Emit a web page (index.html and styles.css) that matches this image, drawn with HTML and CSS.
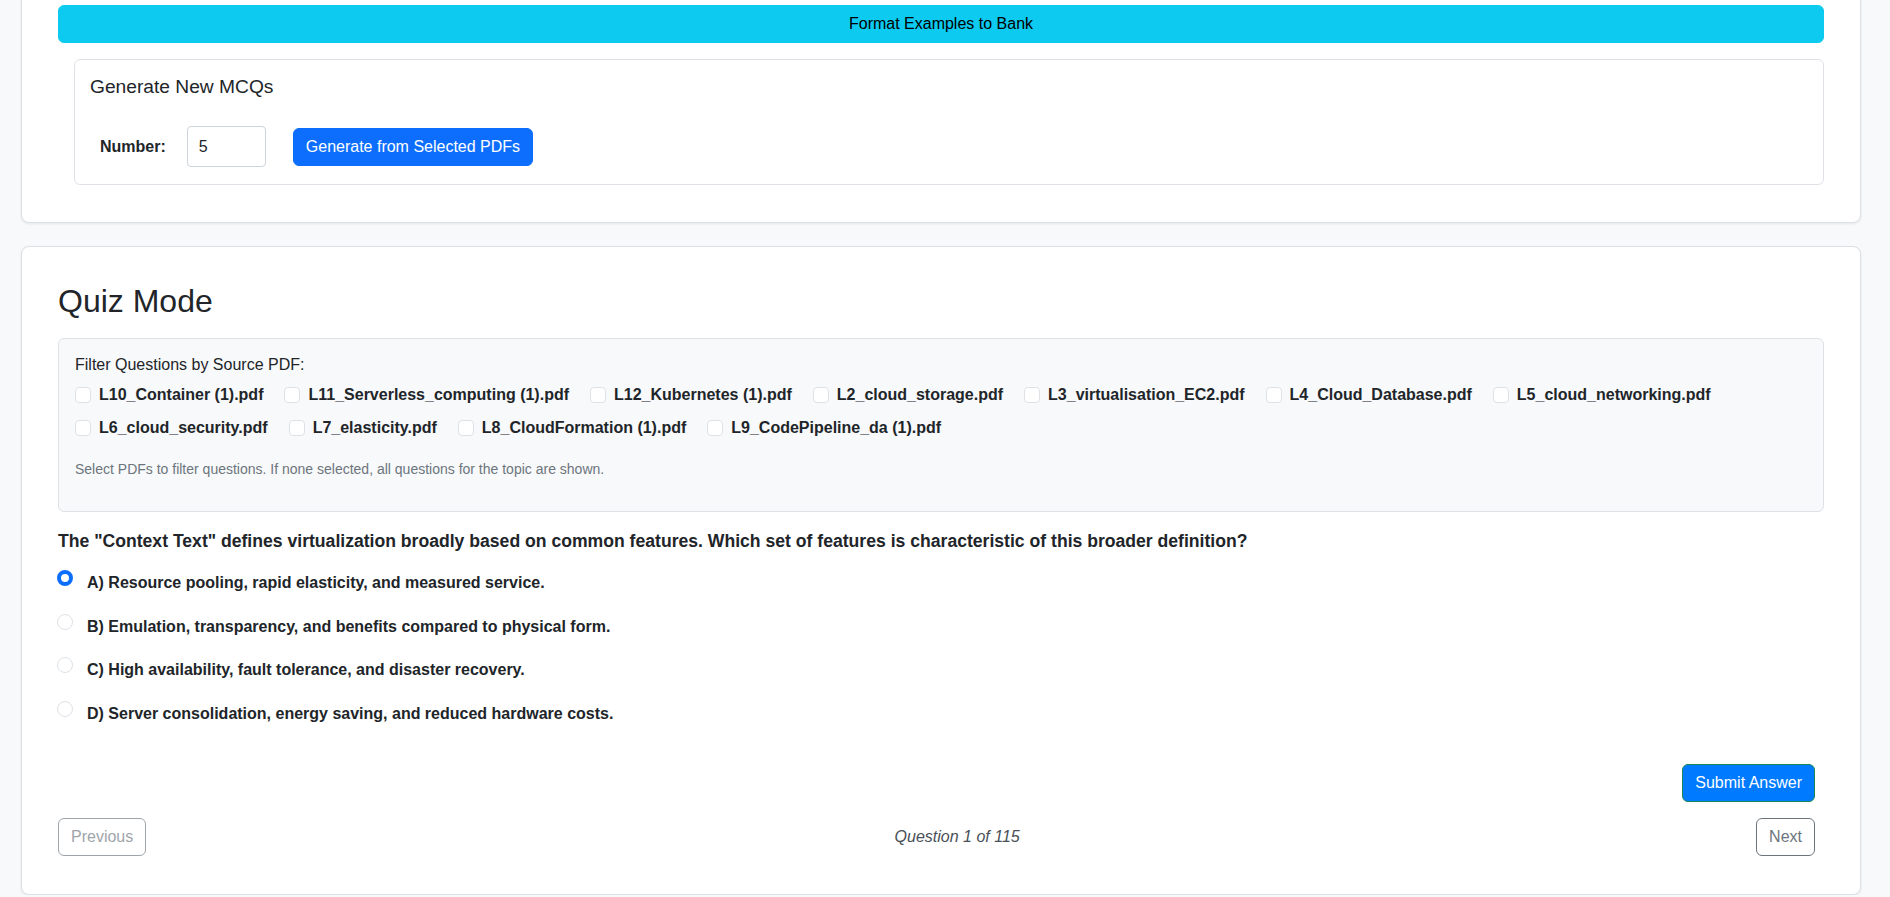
FILE: index.html
```html
<!DOCTYPE html>
<html lang="en">
<head>
<meta charset="utf-8">
<title>MCQ Quiz</title>
<link rel="stylesheet" href="styles.css">
</head>
<body>
<div class="page">
  <section class="card card-top">
    <button class="btn btn-info btn-block">Format Examples to Bank</button>
    <div class="gen-box">
      <h5 class="gen-title">Generate New MCQs</h5>
      <div class="gen-row">
        <label class="num-label" for="num">Number:</label>
        <input id="num" class="num-input" type="number" value="5">
        <button class="btn btn-primary">Generate from Selected PDFs</button>
      </div>
    </div>
  </section>

  <section class="card card-quiz">
    <h2 class="quiz-title">Quiz Mode</h2>
    <div class="filter-box">
      <div class="filter-label">Filter Questions by Source PDF:</div>
      <div class="pdf-list">
        <label class="pdf-item"><span class="check"></span>L10_Container (1).pdf</label>
        <label class="pdf-item"><span class="check"></span>L11_Serverless_computing (1).pdf</label>
        <label class="pdf-item"><span class="check"></span>L12_Kubernetes (1).pdf</label>
        <label class="pdf-item"><span class="check"></span>L2_cloud_storage.pdf</label>
        <label class="pdf-item"><span class="check"></span>L3_virtualisation_EC2.pdf</label>
        <label class="pdf-item"><span class="check"></span>L4_Cloud_Database.pdf</label>
        <label class="pdf-item"><span class="check"></span>L5_cloud_networking.pdf</label>
        <label class="pdf-item"><span class="check"></span>L6_cloud_security.pdf</label>
        <label class="pdf-item"><span class="check"></span>L7_elasticity.pdf</label>
        <label class="pdf-item"><span class="check"></span>L8_CloudFormation (1).pdf</label>
        <label class="pdf-item"><span class="check"></span>L9_CodePipeline_da (1).pdf</label>
      </div>
      <div class="help-text">Select PDFs to filter questions. If none selected, all questions for the topic are shown.</div>
    </div>

    <p class="question">The "Context Text" defines virtualization broadly based on common features. Which set of features is characteristic of this broader definition?</p>

    <div class="options">
      <label class="option"><span class="radio checked"></span><span>A) Resource pooling, rapid elasticity, and measured service.</span></label>
      <label class="option"><span class="radio"></span><span>B) Emulation, transparency, and benefits compared to physical form.</span></label>
      <label class="option"><span class="radio"></span><span>C) High availability, fault tolerance, and disaster recovery.</span></label>
      <label class="option"><span class="radio"></span><span>D) Server consolidation, energy saving, and reduced hardware costs.</span></label>
    </div>

    <div class="submit-row">
      <button class="btn btn-submit">Submit Answer</button>
    </div>

    <div class="nav-row">
      <button class="btn btn-outline disabled">Previous</button>
      <span class="counter">Question 1 of 115</span>
      <button class="btn btn-outline">Next</button>
    </div>
  </section>
</div>
</body>
</html>
```

FILE: styles.css
```css
* { box-sizing: border-box; }

html, body {
  margin: 0;
  padding: 0;
  background: #f8f9fa;
  font-family: "Liberation Sans", Arial, sans-serif;
  color: #212529;
  font-size: 16px;
  overflow: hidden;
}

.page {
  width: 1840px;
  margin-left: 21px;
}

.card {
  background: #fff;
  border: 1px solid #dcdfe3;
  border-radius: 8px;
  box-shadow: 0 1px 3px rgba(0, 0, 0, 0.08);
  padding: 35px 36px 37px 36px;
}

.card-top {
  margin-top: -31px;
}

.card-quiz {
  margin-top: 23px;
  padding-top: 35px;
  padding-bottom: 38px;
}

.btn {
  font-family: inherit;
  font-size: 16px;
  line-height: 24px;
  padding: 6px 12px;
  border: 1px solid transparent;
  border-radius: 6px;
  cursor: pointer;
  display: inline-block;
}

.btn-block {
  display: block;
  width: 100%;
}

.btn-info {
  background: #0dcaf0;
  border-color: #0dcaf0;
  color: #000;
}

.btn-primary {
  background: #0d6efd;
  border-color: #0d6efd;
  color: #fff;
}

.gen-box {
  margin-top: 16px;
  margin-left: 16px;
  border: 1px solid #dee2e6;
  border-radius: 6px;
  padding: 15px 15px 17px 15px;
}

.gen-title {
  margin: 0;
  font-size: 19.2px;
  font-weight: 400;
  line-height: 24px;
}

.gen-row {
  display: flex;
  align-items: center;
  margin-top: 27px;
  padding-left: 10px;
}

.num-label {
  font-weight: 700;
  margin-right: 21px;
}

.num-input {
  width: 79px;
  height: 41px;
  border: 1px solid #ced4da;
  border-radius: 4px;
  padding: 6px 11px;
  font-family: inherit;
  font-size: 16px;
  color: #212529;
  margin-right: 27px;
  -moz-appearance: textfield;
}

.num-input::-webkit-inner-spin-button,
.num-input::-webkit-outer-spin-button {
  -webkit-appearance: none;
  margin: 0;
}

.quiz-title {
  margin: 0 0 18px 0;
  font-size: 32px;
  font-weight: 400;
  line-height: 38.4px;
}

.filter-box {
  background: #f8f9fa;
  border: 1px solid #dee2e6;
  border-radius: 6px;
  padding: 16px 16px 16px 16px;
}

.filter-label {
  font-size: 16px;
  line-height: 20px;
  margin-bottom: 8px;
}

.pdf-list {
  display: flex;
  flex-wrap: wrap;
  column-gap: 21px;
  row-gap: 9px;
}

.pdf-item {
  display: flex;
  align-items: center;
  font-weight: 700;
  line-height: 24px;
}

.check {
  width: 16px;
  height: 16px;
  border: 1px solid #dee2e6;
  border-radius: 4px;
  background: #fff;
  margin-right: 8px;
}

.help-text {
  margin-top: 21px;
  margin-bottom: 18px;
  font-size: 14px;
  line-height: 16px;
  color: #6c757d;
}

.question {
  margin: 19px 0 18.6px 0;
  font-size: 17.6px;
  line-height: 21px;
  font-weight: 700;
}

.options {
  display: flex;
  flex-direction: column;
  row-gap: 19.7px;
}

.option {
  display: flex;
  align-items: flex-start;
  font-weight: 700;
  line-height: 24px;
  padding-left: 0;
  margin-left: -1px;
}

.radio {
  width: 16px;
  height: 16px;
  border: 1px solid #dee2e6;
  border-radius: 50%;
  background: #fff;
  margin-top: -1px;
  margin-right: 14px;
  flex: none;
}

.radio.checked {
  background: #fff;
  border: 4px solid #0d6efd;
}

.submit-row {
  display: flex;
  justify-content: flex-end;
  margin-top: 38px;
  padding-right: 9px;
}

.btn-submit {
  background: #007bff;
  border-color: #198754;
  color: #fff;
}

.nav-row {
  display: flex;
  justify-content: space-between;
  align-items: center;
  margin-top: 16px;
  padding-right: 9px;
}

.btn-outline {
  background: transparent;
  border-color: #6c757d;
  color: #6c757d;
}

.btn-outline.disabled {
  opacity: 0.65;
  cursor: default;
}

.counter {
  font-style: italic;
  color: #495057;
  margin-left: 12px;
}
```
